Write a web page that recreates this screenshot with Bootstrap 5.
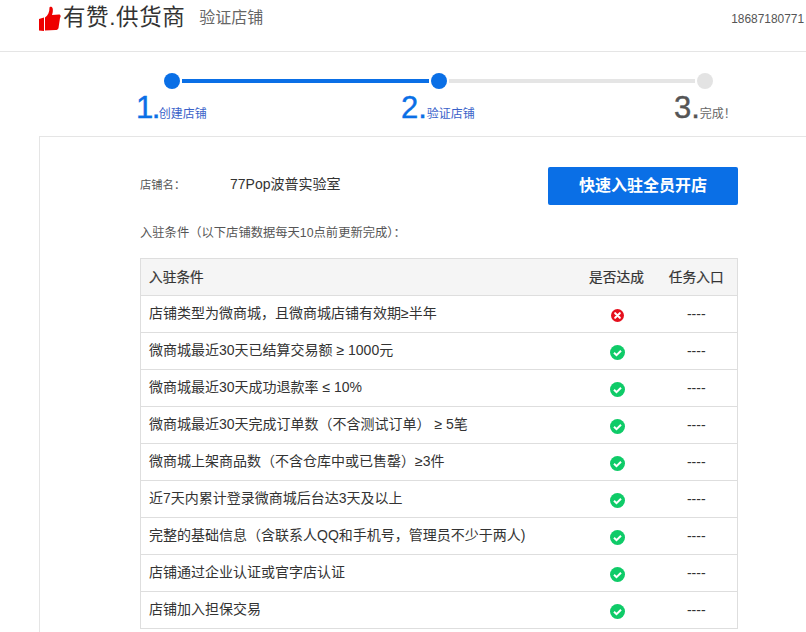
<!DOCTYPE html>
<html lang="zh">
<head>
<meta charset="utf-8">
<title>验证店铺</title>
<link href="https://cdn.jsdelivr.net/npm/bootstrap@5.3.0/dist/css/bootstrap.min.css" rel="stylesheet">
<style>
html,body{height:632px;overflow:hidden}
body{font-family:"Liberation Sans","Noto Sans CJK SC",sans-serif;color:#333;font-size:13px;background:#fff}
.topbar{height:52px;border-bottom:1px solid #e5e5e5;padding:0 2px 0 39px}
.brand-name{font-size:22.500px;color:#333;line-height:38px;margin-left:2px;letter-spacing:.6px}
.brand-sub{font-size:16px;color:#666;margin-left:14px;line-height:38px}
.brand-row{margin-top:-1px}
.acct{font-size:11.900px;color:#555;margin-top:13px;line-height:12px}
.stepper{padding:21px 0 0 164px;width:713px;height:84px}
.dot{width:16px;height:16px;border-radius:50%;background:#0a6fe6;flex:none}
.dot.off{background:#e3e3e3}
.bar{height:4px;flex:1;margin:0 2px;background:#0a6fe6}
.bar.off{background:#e5e5e5}
.step-labels{display:grid;grid-template-columns:264px 273px auto;margin:2px 0 0 -27px;width:600px}
.step-num{font-size:31px;line-height:34px;font-weight:400;color:#0a6fe6;-webkit-text-stroke:.4px currentColor}
.step-txt{font-size:12px;color:#3a62c9;line-height:16px}
.step-labels>div:first-child .step-num{letter-spacing:-1.500px;margin-left:-1px}
.is-off .step-num{color:#555}
.is-off .step-txt{color:#666}
.panel{margin-left:39px;border-top:1px solid #e5e5e5;border-left:1px solid #e5e5e5;padding:30px 68px 0 100px;height:520px}
.shop-row{height:38px}
.shop-label{font-size:11.300px;color:#555;width:90px;margin-top:-2px}
.shop-name{font-size:14px;color:#333;margin-top:-4px}
.join-btn{width:190px;height:38px;border-radius:2px;background:#0a6fe6;border:0;color:#fff;font-size:16px;font-weight:700;padding:0}
.cond-note{font-size:12.300px;color:#555;margin:20px 0 17px;line-height:16px}
.cond-table{width:598px;table-layout:fixed;font-size:14px;margin:0;border-color:#dedede}
.cond-table th,.cond-table td{height:37px;padding:0 8px;vertical-align:middle;color:#333;box-shadow:none;border-left-width:0;border-right-width:0}
.cond-table td:first-child{padding-bottom:2px}
.cond-table td:nth-child(2){padding:0 8px 2px 10px}
.cond-table tr>*:first-child{border-left-width:1px}
.cond-table tr>*:last-child{border-right-width:1px}
.cond-table th{background:#f5f5f5;font-weight:400;font-size:13.700px;-webkit-text-stroke:.2px #333;padding-top:2px}
.cell-mid{text-align:center}
.ic{display:block;margin:5px auto 0}
.ic-ok{fill:#0fcb68}
</style>
</head>
<body>
<header class="topbar d-flex justify-content-between align-items-start">
  <div class="d-flex align-items-center brand-row">
    <svg width="22" height="25" viewBox="0 0 22 25" aria-hidden="true"><path fill="#ee0000" d="M0 13 5 11.5V25L0 24.5Z"/><path fill="#ee0000" d="M6 11.5C9 9.5 10.500 6 10.500 1.500 10.500.5 13.500 0 13.800 3 14 6 13.500 7.500 13 9L20 8.500C22 8.500 22 11 21 12L19.500 22C19 23.500 18 24 16.500 24L6 24.500Z"/></svg>
    <span class="brand-name">有赞.供货商</span>
    <span class="brand-sub">验证店铺</span>
  </div>
  <div class="acct">18687180771</div>
</header>
<section class="stepper">
  <div class="d-flex align-items-center">
    <span class="dot"></span><span class="bar"></span><span class="dot"></span><span class="bar off"></span><span class="dot off"></span>
  </div>
  <div class="step-labels">
    <div><span class="step-num">1.</span><span class="step-txt">创建店铺</span></div>
    <div><span class="step-num">2.</span><span class="step-txt">验证店铺</span></div>
    <div class="is-off"><span class="step-num">3.</span><span class="step-txt">完成！</span></div>
  </div>
</section>
<main class="panel">
  <div class="d-flex align-items-center shop-row">
    <span class="shop-label">店铺名：</span>
    <span class="shop-name flex-grow-1">77Pop波普实验室</span>
    <button class="btn join-btn" type="button">快速入驻全员开店</button>
  </div>
  <p class="cond-note">入驻条件（以下店铺数据每天10点前更新完成）：</p>
  <table class="table table-bordered cond-table">
    <colgroup><col><col style="width:78px"><col style="width:82px"></colgroup>
    <thead><tr><th>入驻条件</th><th class="cell-mid">是否达成</th><th class="cell-mid">任务入口</th></tr></thead>
    <tbody>
      <tr><td>店铺类型为微商城，且微商城店铺有效期≥半年</td><td><svg class="ic" width="13" height="13" viewBox="0 0 14 14"><circle cx="7" cy="7" r="7" fill="#e5101d"/><path d="M4.500 4.500l5 5m0-5l-5 5" stroke="#fff" stroke-width="2.200" stroke-linecap="round"/></svg></td><td class="cell-mid">----</td></tr>
      <tr><td>微商城最近30天已结算交易额 ≥ 1000元</td><td><svg class="ic" width="15" height="15" viewBox="0 0 15 15"><circle class="ic-ok" cx="7.500" cy="7.500" r="7.500"/><path d="M4 7.700l2.500 2.500 4.500-4.500" fill="none" stroke="#fff" stroke-width="2"/></svg></td><td class="cell-mid">----</td></tr>
      <tr><td>微商城最近30天成功退款率 ≤ 10%</td><td><svg class="ic" width="15" height="15" viewBox="0 0 15 15"><circle class="ic-ok" cx="7.500" cy="7.500" r="7.500"/><path d="M4 7.700l2.500 2.500 4.500-4.500" fill="none" stroke="#fff" stroke-width="2"/></svg></td><td class="cell-mid">----</td></tr>
      <tr><td>微商城最近30天完成订单数（不含测试订单） ≥ 5笔</td><td><svg class="ic" width="15" height="15" viewBox="0 0 15 15"><circle class="ic-ok" cx="7.500" cy="7.500" r="7.500"/><path d="M4 7.700l2.500 2.500 4.500-4.500" fill="none" stroke="#fff" stroke-width="2"/></svg></td><td class="cell-mid">----</td></tr>
      <tr><td>微商城上架商品数（不含仓库中或已售罄）≥3件</td><td><svg class="ic" width="15" height="15" viewBox="0 0 15 15"><circle class="ic-ok" cx="7.500" cy="7.500" r="7.500"/><path d="M4 7.700l2.500 2.500 4.500-4.500" fill="none" stroke="#fff" stroke-width="2"/></svg></td><td class="cell-mid">----</td></tr>
      <tr><td>近7天内累计登录微商城后台达3天及以上</td><td><svg class="ic" width="15" height="15" viewBox="0 0 15 15"><circle class="ic-ok" cx="7.500" cy="7.500" r="7.500"/><path d="M4 7.700l2.500 2.500 4.500-4.500" fill="none" stroke="#fff" stroke-width="2"/></svg></td><td class="cell-mid">----</td></tr>
      <tr><td>完整的基础信息（含联系人QQ和手机号，管理员不少于两人)</td><td><svg class="ic" width="15" height="15" viewBox="0 0 15 15"><circle class="ic-ok" cx="7.500" cy="7.500" r="7.500"/><path d="M4 7.700l2.500 2.500 4.500-4.500" fill="none" stroke="#fff" stroke-width="2"/></svg></td><td class="cell-mid">----</td></tr>
      <tr><td>店铺通过企业认证或官字店认证</td><td><svg class="ic" width="15" height="15" viewBox="0 0 15 15"><circle class="ic-ok" cx="7.500" cy="7.500" r="7.500"/><path d="M4 7.700l2.500 2.500 4.500-4.500" fill="none" stroke="#fff" stroke-width="2"/></svg></td><td class="cell-mid">----</td></tr>
      <tr><td>店铺加入担保交易</td><td><svg class="ic" width="15" height="15" viewBox="0 0 15 15"><circle class="ic-ok" cx="7.500" cy="7.500" r="7.500"/><path d="M4 7.700l2.500 2.500 4.500-4.500" fill="none" stroke="#fff" stroke-width="2"/></svg></td><td class="cell-mid">----</td></tr>
    </tbody>
  </table>
</main>
<script src="https://cdn.jsdelivr.net/npm/bootstrap@5.3.0/dist/js/bootstrap.bundle.min.js"></script>
</body>
</html>
